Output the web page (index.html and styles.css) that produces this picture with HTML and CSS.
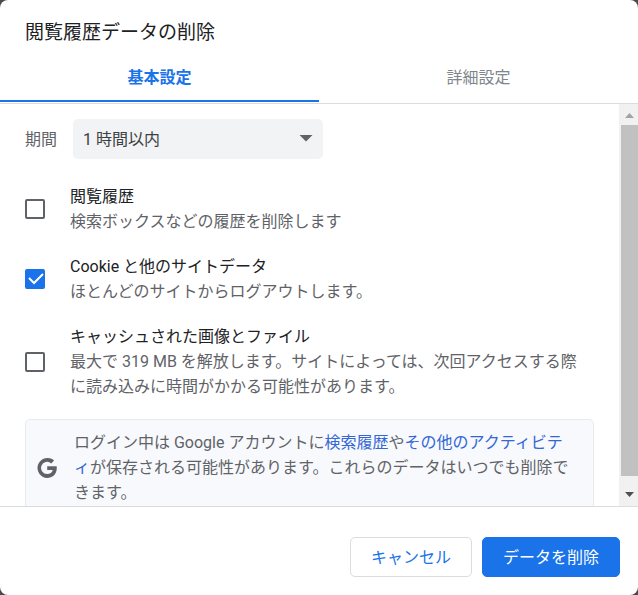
FILE: index.html
```html
<!DOCTYPE html>
<html lang="ja">
<head>
  <meta charset="utf-8">
  <meta name="viewport" content="width=device-width, initial-scale=1">
  <title>閲覧履歴データの削除</title>
  <link rel="stylesheet" href="styles.css">
</head>
<body>
  <main class="dialog">
    <header class="header">
      <h1 class="title">閲覧履歴データの削除</h1>
      <div class="tabs" role="tablist">
        <button class="tab tab-selected" type="button" role="tab" aria-selected="true">基本設定</button>
        <button class="tab" type="button" role="tab" aria-selected="false">詳細設定</button>
      </div>
    </header>

    <div class="body">
      <div class="content">
        <div class="period">
          <label class="period-label" for="period">期間</label>
          <div class="select-wrap">
            <select class="select" id="period">
              <option>1 時間以内</option>
            </select>
            <svg class="select-arrow" width="14" height="7" viewBox="0 0 14 7" aria-hidden="true"><path d="M0.5 0h13L7 6.5z"/></svg>
          </div>
        </div>

        <div class="options">
          <label class="option">
            <input class="checkbox" type="checkbox">
            <span class="option-text">
              <span class="option-title">閲覧履歴</span>
              <span class="option-note">検索ボックスなどの履歴を削除します</span>
            </span>
          </label>
          <label class="option">
            <span class="check-wrap">
              <input class="checkbox" type="checkbox" checked>
              <svg class="check-mark" viewBox="0 0 20 20" aria-hidden="true"><path d="M4 9l5 5L18 5"/></svg>
            </span>
            <span class="option-text">
              <span class="option-title">Cookie と他のサイトデータ</span>
              <span class="option-note">ほとんどのサイトからログアウトします。</span>
            </span>
          </label>
          <label class="option">
            <input class="checkbox" type="checkbox">
            <span class="option-text">
              <span class="option-title">キャッシュされた画像とファイル</span>
              <span class="option-note">最大で 319 MB を解放します。サイトによっては、次回アクセスする際に読み込みに時間がかかる可能性があります。</span>
            </span>
          </label>
        </div>

        <div class="notice">
          <svg class="google" viewBox="0 0 20 20" aria-hidden="true"><path d="M10.200 8.200v3.900h5.500c-.5 2.500-2.600 4-5.500 4a6.100 6.100 0 1 1 4-10.700l2.900-2.900A10 10 0 1 0 10.200 20C15.200 20 19.800 16.400 19.800 10c0-.6-.1-1.200-.2-1.800z"/></svg>
          <p class="notice-text">ログイン中は Google アカウントに<a href="#">検索履歴</a>や<a href="#">その他のアクティビティ</a>が保存される可能性があります。これらのデータはいつでも削除できます。</p>
        </div>
      </div>

      <div class="scrollbar" aria-hidden="true">
        <svg class="scroll-arrow scroll-up" viewBox="0 0 19 21"><path d="M6 14l4.500-5L15 14z"/></svg>
        <div class="scroll-track"><div class="scroll-thumb"></div></div>
        <svg class="scroll-arrow scroll-down" viewBox="0 0 19 21"><path d="M6 7l4.500 5L15 7z"/></svg>
      </div>
    </div>

    <footer class="footer">
      <button class="button" type="button">キャンセル</button>
      <button class="button button-primary" type="button">データを削除</button>
    </footer>
  </main>
</body>
</html>
```
FILE: styles.css
```css
* {
  box-sizing: border-box;
}

body {
  margin: 0;
  background: #4a4a4c;
  color: #202124;
  font: 16px/25px Roboto, "Noto Sans CJK JP", sans-serif;
}

button,
select {
  font: inherit;
}

.dialog {
  display: flex;
  flex-direction: column;
  height: 100vh;
  border-radius: 8px;
  background: #fff;
  overflow: hidden;
}

.header {
  border-bottom: 1px solid #dadce0;
}

.title {
  margin: 0;
  padding: 20px 25px 0;
  font-size: 19px;
  font-weight: 400;
}

.tabs {
  display: grid;
  grid-template-columns: 1fr 1fr;
  padding: 7px 0 1px;
}

.tab {
  height: 50px;
  padding: 2px 0 0;
  border: 0;
  border-bottom: 2px solid transparent;
  background: none;
  color: #80868b;
}

.tab-selected {
  border-color: #1a73e8;
  color: #1a73e8;
  font-weight: 700;
}

.body {
  display: flex;
  flex: 1;
  min-height: 0;
  overflow: hidden;
}

.content {
  flex: 1;
  padding: 15px 25px 0;
}

.period {
  display: flex;
  align-items: center;
  gap: 16px;
}

.period-label {
  color: #5f6368;
}

.select-wrap {
  position: relative;
  width: 250px;
}

.select {
  appearance: none;
  width: 100%;
  height: 40px;
  padding: 0 30px 0 10px;
  border: 0;
  border-radius: 5px;
  background: #f1f3f4;
  color: #3c4043;
}

.select-arrow {
  position: absolute;
  top: 16px;
  right: 10px;
  fill: #5f6368;
  pointer-events: none;
}

.options {
  display: grid;
  gap: 20px;
  padding: 25px 8px 20px 0;
}

.option {
  display: flex;
  align-items: center;
  gap: 25px;
}

.option-text {
  flex: 1;
}

.option-title,
.option-note {
  display: block;
}

.option-note {
  color: #5f6368;
}

.checkbox {
  appearance: none;
  display: block;
  flex: none;
  width: 20px;
  height: 20px;
  margin: 0;
  border: 2px solid #5f6368;
  border-radius: 2px;
}

.checkbox:checked {
  border-color: #1a73e8;
  background: #1a73e8;
}

.check-wrap {
  position: relative;
}

.check-mark {
  position: absolute;
  inset: 0;
  fill: none;
  stroke: #fff;
  stroke-width: 2;
  pointer-events: none;
}

.notice {
  display: flex;
  align-items: center;
  gap: 17px;
  padding: 10px 20px 10px 11px;
  border: 1px solid #e8eaed;
  border-radius: 5px;
  background: #f8f9fc;
}

.google {
  flex: none;
  width: 20px;
  height: 20px;
  fill: #5f6368;
}

.notice-text {
  margin: 0;
  color: #5f6368;
}

.notice-text a {
  color: #3367d6;
  text-decoration: none;
}

.scrollbar {
  display: flex;
  flex-direction: column;
  width: 19px;
  background: #f1f1f1;
}

.scroll-arrow {
  flex: none;
  height: 21px;
}

.scroll-up {
  fill: #a3a3a3;
}

.scroll-down {
  fill: #505050;
}

.scroll-track {
  flex: 1;
  padding-left: 2px;
}

.scroll-thumb {
  height: 97.5%;
  background: #c1c1c1;
}

.footer {
  display: flex;
  justify-content: flex-end;
  gap: 10px;
  padding: 30px 18px 18px;
  border-top: 1px solid #dadce0;
}

.button {
  height: 40px;
  padding: 0 20px;
  border: 1px solid #dadce0;
  border-radius: 5px;
  background: #fff;
  color: #1a73e8;
}

.button-primary {
  border-color: #1a73e8;
  background: #1a73e8;
  color: #fff;
}
```
